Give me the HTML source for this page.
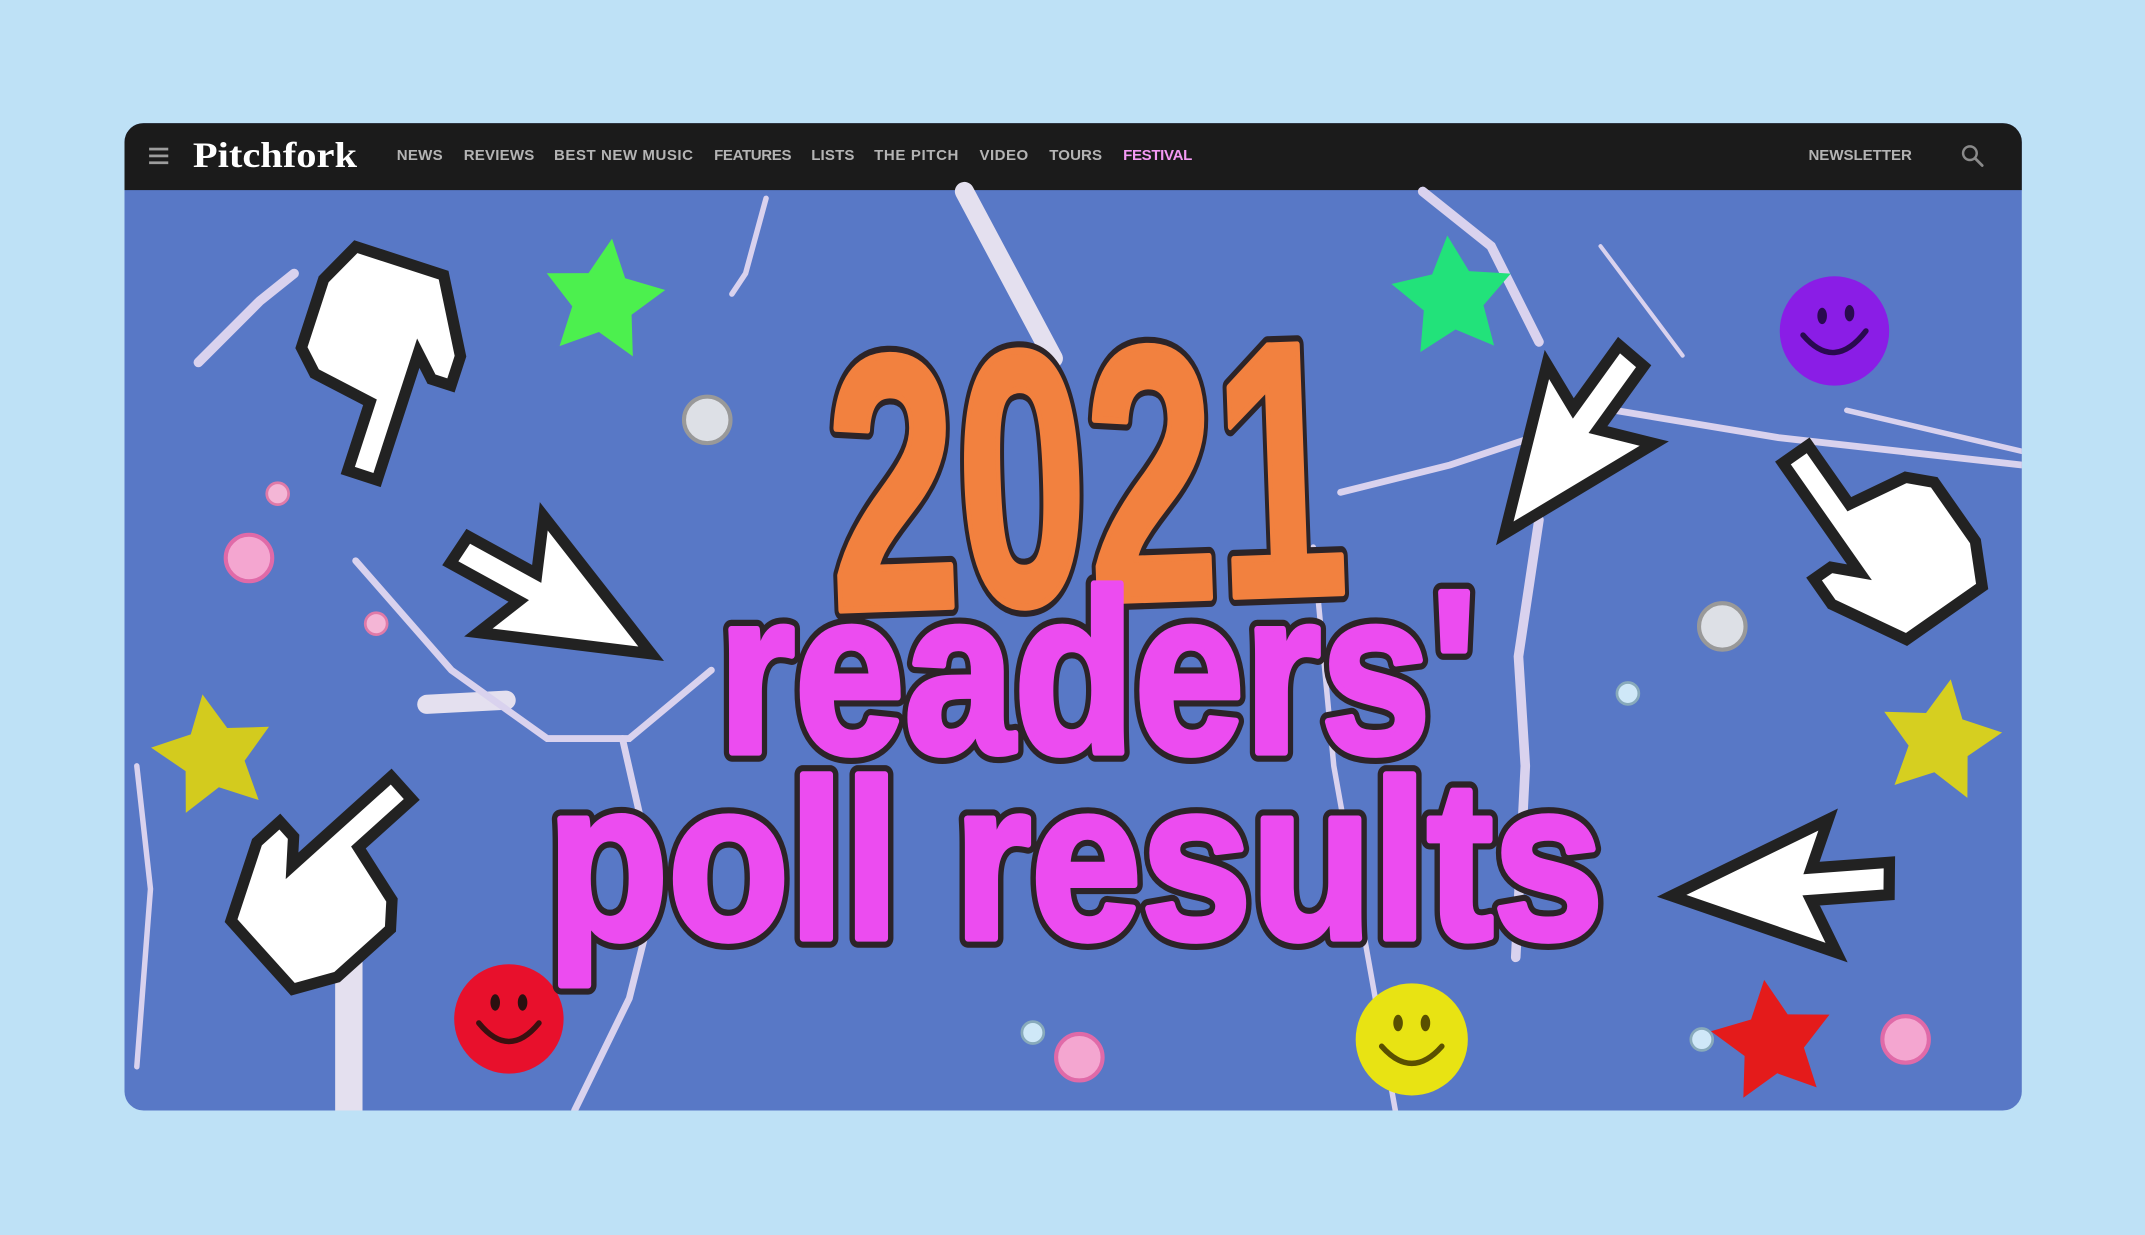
<!DOCTYPE html>
<html><head><meta charset="utf-8"><style>
html,body{margin:0;padding:0;background:#bee1f6;width:2145px;height:1235px;overflow:hidden}
svg{display:block}
</style></head><body>
<svg width="2145" height="1235" viewBox="0 0 1568 903" preserveAspectRatio="none" xmlns="http://www.w3.org/2000/svg">
<defs>
<clipPath id="card"><rect x="91" y="90" width="1387" height="722" rx="14"/></clipPath>
<polygon id="star" points="0,-1 0.294,-0.405 0.951,-0.309 0.476,0.155 0.588,0.809 0,0.5 -0.588,0.809 -0.476,0.155 -0.951,-0.309 -0.294,-0.405"/>
<polygon id="arrow" points="0,0 0,17 4,13 7,20 10,19 7,12 12,12" fill="#fff" stroke="#222" stroke-width="1.1" stroke-linejoin="miter"/>
<polygon id="hand" points="4,0 7,0 7,7 13,8 15,10 15,17 13,21 4,21 0,14 0,11 2,11 4,13" fill="#fff" stroke="#222" stroke-width="1.1"/>
</defs>
<rect width="1568" height="903" fill="#bee1f6"/>
<g clip-path="url(#card)">
<rect x="91" y="90" width="1387" height="722" fill="#5878c6"/>
<rect x="91" y="90" width="1387" height="49" fill="#1b1b1b"/>
<g fill="none" stroke="#d9d2ee" stroke-linecap="round">
<path d="M705 140 L770 262" stroke="#e4e0ef" stroke-width="14"/>
<path d="M255 700 L255 812" stroke="#e4e0ef" stroke-width="20"/>
<path d="M312 515 L370 512" stroke="#e4e0ef" stroke-width="14"/>
<path d="M1040 140 L1090 180 L1125 250" stroke-width="7"/>
<path d="M980 360 L1060 340 L1180 300 L1300 320 L1478 340" stroke-width="5"/>
<path d="M1125 380 L1110 480 L1115 560 L1108 700" stroke-width="7"/>
<path d="M960 400 L975 560 L1000 700 L1020 812" stroke-width="4"/>
<path d="M260 410 L330 490 L400 540 L460 540 L520 490" stroke-width="5"/>
<path d="M145 265 L190 220 L215 200" stroke-width="7"/>
<path d="M455 540 L480 650 L460 730 L420 812" stroke-width="5"/>
<path d="M560 145 L545 200 L535 215" stroke-width="4"/>
<path d="M1170 180 L1230 260" stroke-width="3"/>
<path d="M1350 300 L1478 330" stroke-width="4"/>
<path d="M100 560 L110 650 L100 780" stroke-width="4"/>
</g>
<use href="#star" transform="translate(441,220) rotate(8) scale(46)" fill="#4cf04e"/>
<use href="#star" transform="translate(1062,218) rotate(-5) scale(46)" fill="#22e27a"/>
<use href="#star" transform="translate(156,553) rotate(-10) scale(46)" fill="#d3cb1e"/>
<use href="#star" transform="translate(1418,542) rotate(10) scale(46)" fill="#d6cf20"/>
<use href="#star" transform="translate(1296,762) rotate(-8) scale(46)" fill="#e41b1b"/>
<g>
<circle cx="372" cy="745" r="40" fill="#e8102c"/>
<circle cx="1032" cy="760" r="41" fill="#e8e313"/>
<circle cx="1341" cy="242" r="40" fill="#8a1de6"/>
<g fill="none" stroke="#3a1010" stroke-width="4" stroke-linecap="round">
<path d="M350 748 Q372 775 394 748"/><path d="M1010 765 Q1032 790 1054 765" stroke="#5a5000"/><path d="M1318 245 Q1341 272 1364 242" stroke="#2a0a50"/>
</g>
<g fill="#2a1010"><ellipse cx="362" cy="733" rx="3.5" ry="6"/><ellipse cx="382" cy="733" rx="3.5" ry="6"/>
<ellipse cx="1022" cy="748" rx="3.5" ry="6" fill="#5a5000"/><ellipse cx="1042" cy="748" rx="3.5" ry="6" fill="#5a5000"/>
<ellipse cx="1332" cy="231" rx="3.5" ry="6" fill="#2a0a50"/><ellipse cx="1352" cy="229" rx="3.5" ry="6" fill="#2a0a50"/></g>
</g>
<g stroke-width="3">
<circle cx="517" cy="307" r="17" fill="#dde0e6" stroke="#999"/>
<circle cx="1259" cy="458" r="17" fill="#dde0e6" stroke="#999"/>
<circle cx="182" cy="408" r="17" fill="#f4a6d0" stroke="#e06aa8"/>
<circle cx="789" cy="773" r="17" fill="#f4a6d0" stroke="#e06aa8"/>
<circle cx="1393" cy="760" r="17" fill="#f4a6d0" stroke="#e06aa8"/>
<circle cx="203" cy="361" r="8" fill="#f4b6d6" stroke="#e07aa8" stroke-width="2"/>
<circle cx="275" cy="456" r="8" fill="#f4b6d6" stroke="#e07aa8" stroke-width="2"/>
<circle cx="755" cy="755" r="8" fill="#cfe8f8" stroke="#8ab" stroke-width="2"/>
<circle cx="1190" cy="507" r="8" fill="#cfe8f8" stroke="#8ab" stroke-width="2"/>
<circle cx="1244" cy="760" r="8" fill="#cfe8f8" stroke="#8ab" stroke-width="2"/>
</g>
<use href="#hand" transform="translate(275,268) rotate(198) scale(7.5) translate(-7.5,-10.5)"/>
<use href="#arrow" transform="translate(476,478) rotate(142) scale(7.5)"/>
<use href="#hand" transform="translate(245,640) rotate(48) scale(7.5) translate(-7.5,-10.5)"/>
<use href="#arrow" transform="translate(1100,390) rotate(239) scale(7.5)"/>
<use href="#hand" transform="translate(1370,388) rotate(-35) scale(7.5) translate(-7.5,-10.5)"/>
<use href="#arrow" transform="translate(1222,655) rotate(289) scale(7.5)"/>
<g font-family="Liberation Sans, sans-serif" font-weight="bold" stroke="#2c2428" stroke-width="14" paint-order="stroke" stroke-linejoin="round">
<text x="605" y="440" font-size="265" textLength="378" lengthAdjust="spacingAndGlyphs" fill="#f2813f" transform="rotate(-2 790 340)">2021</text>
<text x="525" y="550" font-size="170" textLength="555" lengthAdjust="spacingAndGlyphs" fill="#ec4cf0">readers'</text>
<text x="400" y="686" font-size="165" textLength="772" lengthAdjust="spacingAndGlyphs" fill="#ec4cf0">poll results</text>
</g>
<g font-family="Liberation Sans, sans-serif" font-weight="bold" stroke-width="5" stroke-linejoin="round">
<text x="605" y="440" font-size="265" textLength="378" lengthAdjust="spacingAndGlyphs" fill="#f2813f" stroke="#f2813f" transform="rotate(-2 790 340)">2021</text>
<text x="525" y="550" font-size="170" textLength="555" lengthAdjust="spacingAndGlyphs" fill="#ec4cf0" stroke="#ec4cf0">readers'</text>
<text x="400" y="686" font-size="165" textLength="772" lengthAdjust="spacingAndGlyphs" fill="#ec4cf0" stroke="#ec4cf0">poll results</text>
</g>
<g fill="#9d9d9d"><rect x="109" y="108" width="14" height="2"/><rect x="109" y="113" width="14" height="2"/><rect x="109" y="118" width="14" height="2"/></g>
<text x="141" y="122" font-family="Liberation Serif, serif" font-weight="bold" font-size="26" fill="#fff" textLength="120" lengthAdjust="spacingAndGlyphs">Pitchfork</text>
<g font-family="Liberation Sans, sans-serif" font-weight="bold" font-size="11" fill="#b4b4b4" letter-spacing="0.4">
<text x="290" y="117" textLength="34">NEWS</text>
<text x="339" y="117" textLength="52">REVIEWS</text>
<text x="405" y="117" textLength="102">BEST NEW MUSIC</text>
<text x="522" y="117" textLength="57">FEATURES</text>
<text x="593" y="117" textLength="32">LISTS</text>
<text x="639" y="117" textLength="62">THE PITCH</text>
<text x="716" y="117" textLength="36">VIDEO</text>
<text x="767" y="117" textLength="39">TOURS</text>
<text x="821" y="117" textLength="51" fill="#f59af5">FESTIVAL</text>
<text x="1322" y="117" textLength="76">NEWSLETTER</text>
</g>
<circle cx="1440" cy="112" r="5" fill="none" stroke="#8a8a8a" stroke-width="1.8"/>
<path d="M1444 116 L1449 121" stroke="#8a8a8a" stroke-width="2" stroke-linecap="round"/>
</g>
</svg>
</body></html>
